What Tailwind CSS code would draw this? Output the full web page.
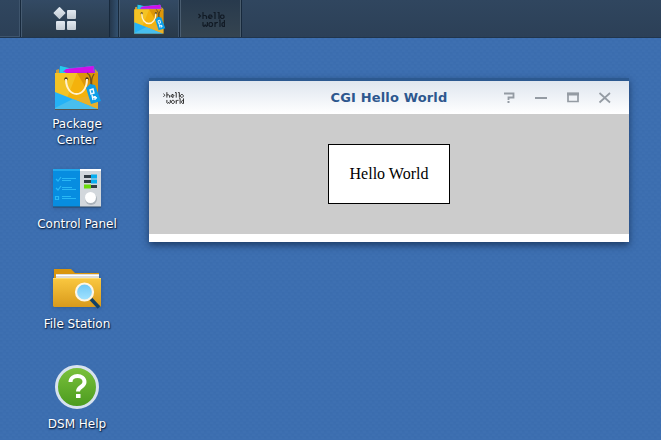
<!DOCTYPE html>
<html lang="en">
<head>
<meta charset="utf-8">
<title>CGI Hello World</title>
<script src="https://cdn.jsdelivr.net/npm/@tailwindcss/browser@4"></script>
</head>
<body class="w-[661px] h-[440px] overflow-hidden bg-[#3b6eb0] font-['DejaVu_Sans',sans-serif]">
<svg width="0" height="0" class="absolute">
  <defs>
    <linearGradient id="gold" x1="0" y1="0" x2="0" y2="1"><stop offset="0" stop-color="#fac840"/><stop offset="1" stop-color="#d99a1b"/></linearGradient>
    <linearGradient id="green" x1="0" y1="0" x2="0" y2="1"><stop offset="0" stop-color="#7cc23c"/><stop offset="1" stop-color="#4a9a1e"/></linearGradient>
    <linearGradient id="lens" x1="0" y1="0" x2="0" y2="1"><stop offset="0" stop-color="#6cc6f6"/><stop offset="1" stop-color="#a5e4ff"/></linearGradient>
    <linearGradient id="tile" x1="0" y1="0" x2="0" y2="1"><stop offset="0" stop-color="#e3eaf2"/><stop offset="1" stop-color="#c3cbd3"/></linearGradient>
    <pattern id="weave" width="6" height="6" patternUnits="userSpaceOnUse"><rect width="6" height="6" fill="#3c6eb0"/><path d="M0 1h3M3 4h3" stroke="#4072b3"/><path d="M0 3h2M4 0h2" stroke="#396bac"/></pattern>
    <symbol id="bag" viewBox="0 0 48 46">
      <path d="M5 1l9 2 25-1 1 8H4z" fill="#25c9ed"/>
      <path d="M9 4l30-3 1 9H9z" fill="#c50fe4"/>
      <path d="M1 5l3-1v4h36V4l3 3v3H1z" fill="#c99b3f"/>
      <path d="M5 1l6 2 3 0-4 5H6zM12 4l26-3 1 6H10z" fill="#25c9ed"/>
      <path d="M11 4l27-3 1 6H8z" fill="#d00fe8"/>
      <path d="M0 8h43v36H0z" fill="#f4b20c"/>
      <path d="M0 8h22L12 33 0 28z" fill="#f3c325"/>
      <path d="M22 8h21v36z" fill="#dc9608"/>
      <path d="M0 27l43 17H0z" fill="#24b2f7"/>
      <path d="M0 43l18-9 25 10H0z" fill="#48beee"/>
      <path d="M19 34l24-5v15z" fill="#e9b12a"/>
      <path d="M0 44.500h43" stroke="#604c2a" stroke-opacity=".7"/>
      <circle cx="11" cy="14" r="1.700" fill="#49351a"/><circle cx="32" cy="14" r="1.700" fill="#49351a"/>
      <path d="M11 14c0 20 21 20 21 0" fill="none" stroke="#fff1ce" stroke-width="2"/>
      <path d="M32 8c4 2 4 7 4 13M39 9c-2 3-3 7-2 12" fill="none" stroke="#70511e" stroke-width="1.300"/>
      <path d="M31 23l4-4 5 1 6 16-10 3z" fill="#0c9ee8"/>
      <path d="M35 25l3-1 1 4-3 1zM37 30l1 5m0-3l4 1m-2-2l0 4" fill="none" stroke="#eefaff" stroke-width="1.400"/>
    </symbol>
    <symbol id="pixelhello" viewBox="0 0 27 15">
      <g fill="none" stroke="currentColor" stroke-width="1.200">
        <path d="M.5 2l2 2-2 2"/>
        <path d="M5 0v7M5 3.500h2.500l1 1V7M13.500 6.500h-2l-1-1v-1l1-1.500h1.500l1 1.200v.8h-3.500M15.500.500H17V7M19.500.500H21V7M23.500 3h1.500l1 1v1.500l-1 1h-1.500l-1-1V4z"/>
        <path d="M5 10v3.500l1 1 1.200-1.500 1.200 1.500 1-1V10M12 10.500h1.500l1 1v2l-1 1H12l-1-1v-2zM17 10v5M17 12l1.500-1.500H20M21 8h1v7M26.400 8v6.500H25l-1-1v-2l1-1h1.400"/>
      </g>
    </symbol>
  </defs>
</svg>

<header class="relative z-10 flex h-[38px] bg-linear-to-b from-[#30465f] to-[#2c4057] border-b border-[#20354d]">
  <div class="w-[20px] border border-t-0 border-l-0 border-[#3f556d]"></div>
  <div class="w-[90px] border-x border-[#17293c] bg-linear-to-b from-[#334a64] to-[#293a4a] flex justify-center pt-[7px] shadow-[inset_1px_0_#465b71]">
    <svg width="24" height="24" fill="url(#tile)"><path d="M6.500 .8L11.700 6 6.500 11.200 1.300 6z" stroke="url(#tile)" stroke-width="1.500" stroke-linejoin="round"/><rect x="14" y="3" width="9" height="9" rx="1"/><rect x="3" y="14" width="9" height="9" rx="1"/><rect x="14" y="14" width="9" height="9" rx="1"/></svg>
  </div>
  <div class="w-[8px] bg-linear-to-r from-[#25384d] to-[#32506f]"></div>
  <div class="w-[62px] border-l border-r border-[#17293c] bg-linear-to-b from-[#334a64] to-[#293a4a] pl-[15px] pt-[4px] shadow-[inset_1px_0_#465b71,inset_-1px_0_#40546a]">
    <svg width="33" height="31"><use href="#bag"/></svg>
  </div>
  <div class="w-[62px] border-r border-[#17293c] bg-linear-to-b from-[#283a4d] to-[#354450] pl-[18px] pt-[12px] text-[#121b26] shadow-[inset_1px_0_#4a5d70,inset_-1px_0_#4a5c6c]">
    <svg width="27" height="15"><use href="#pixelhello"/></svg>
  </div>
</header>

<main class="relative h-[402px] overflow-hidden">
  <svg class="absolute inset-0" width="661" height="402"><rect width="661" height="402" fill="url(#weave)"/></svg>
  <nav class="relative ml-[27px] w-[100px] pt-[27px] text-center text-[12px] leading-[16px] text-white [text-shadow:1px_1px_1px_#10294d,0_1px_2px_#10294d]">
    <div class="h-[100px] flex flex-col items-center">
      <svg width="48" height="46" class="ml-[3px]"><use href="#bag"/></svg>
      <span class="mt-[5px] w-[60px]">Package Center</span>
    </div>
    <div class="h-[100px] flex flex-col items-center pt-[3px]">
      <svg width="50" height="42" class="drop-shadow-sm">
        <path d="M1 1h27v38H1z" fill="#078de0"/><path d="M1 1h27v2H1z" fill="#20a7ec"/><path d="M28 1h21v38H28z" fill="#d2d7dc"/><path d="M28 1h21v2H28z" fill="#fff"/>
        <g fill="none" stroke="#29b8f5" stroke-width="1.200"><path d="M4 11l2 2 3-4M4 20l2 2 3-4M10 10.500h14M10 12.500h9M10 19.500h10M10 21.500h14M10 28.500h9M10 30.500h14M3.500 28.500h3v3h-3z"/></g>
        <g fill="#323c44"><path d="M32 7h13v3H32zM32 12h13v3H32zM32 17h13v3H32z"/></g><path d="M39 6.500h6v4h-6zM39 11.500h6v4h-6z" fill="#08aef0"/><path d="M32 16.500h7v4h-7z" fill="#6bdc0a"/>
        <circle cx="39" cy="31" r="6" fill="#abb3ba"/><circle cx="38.500" cy="29.500" r="5.500" fill="#fff"/><path d="M1 39h48" stroke="#294563"/>
      </svg>
      <span class="mt-[6px] whitespace-nowrap">Control Panel</span>
    </div>
    <div class="h-[100px] flex flex-col items-center pt-[3px]">
      <svg width="50" height="42" class="drop-shadow-sm">
        <path d="M2 1h17l4 4h24v14H2z" fill="#d9950d"/><path d="M4 6h43v7H4z" fill="#dfddd8"/><path d="M4 7.500h43" stroke="#fff"/><path d="M1 10h48v28l-1 1H2l-1-1z" fill="url(#gold)"/><path d="M1 10.500h48" stroke="#ffdb69"/>
        <path d="M39 31l8 8.500" stroke="#114166" stroke-width="3.500"/><circle cx="32.500" cy="24" r="8.500" fill="url(#lens)" stroke="#fff6e4" stroke-width="2.200"/>
      </svg>
      <span class="mt-[6px] whitespace-nowrap">File Station</span>
    </div>
    <div class="flex flex-col items-center">
      <svg width="46" height="46"><circle cx="23" cy="22" r="20.500" fill="url(#green)" stroke="#d7e2ef" stroke-width="3"/><path d="M16.500 17c0-8 14-8 14 0 0 5-6.500 4.500-6.500 9.500" fill="none" stroke="#fff" stroke-width="4"/><path d="M22 29h4.500v4H22z" fill="#fff"/></svg>
      <span class="mt-[5px] whitespace-nowrap">DSM Help</span>
    </div>
  </nav>

  <section class="absolute left-[149px] top-[40px] w-[480px] h-[164px] flex flex-col bg-white border-t-3 border-[#2c5990] shadow-[0_3px_7px_0_rgba(10,30,60,.65)]">
    <div class="h-[33px] flex items-center bg-linear-to-b from-[#dfe6ef] to-white">
      <svg width="21" height="12" class="ml-[14px] text-[#222]"><use href="#pixelhello"/></svg>
      <h1 class="w-[300px] ml-[55px] text-center text-[13px] tracking-[0.15px] font-bold text-[#2d578e]">CGI Hello World</h1>
      <svg width="110" height="13" class="-ml-[36px]" fill="none" stroke="#949ba3" stroke-width="1.500"><path d="M1 2.500h9.500V6.500H5.500v2.500M4.500 11h2" stroke-width="1.800"/><path d="M32 7h12" stroke-width="2"/><path d="M65 2.500h10v8H65z" stroke-width="1.700"/><path d="M64 3h12" stroke-width="3"/><path d="M96.500 2l10.500 9.500M107 2L96.500 11.500" stroke-width="1.700"/></svg>
    </div>
    <div class="h-[120px] bg-[#ccc] pt-[30px] pl-[179px]">
      <div class="w-[122px] h-[60px] bg-white border border-black flex items-center justify-center font-['Liberation_Serif',serif] text-[16px] text-black">Hello World</div>
    </div>
  </section>
</main>
</body>
</html>
